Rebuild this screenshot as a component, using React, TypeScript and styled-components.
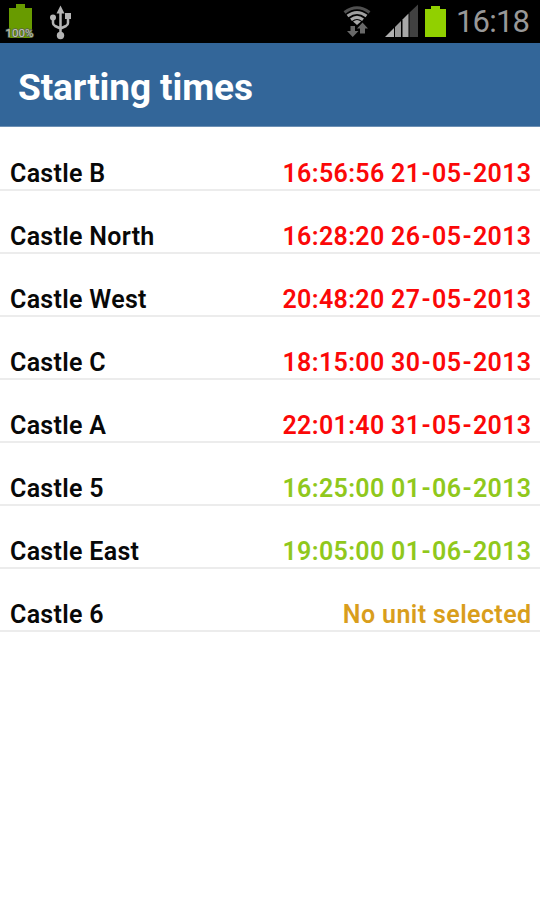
import React, { Fragment } from "react";
import styled, { createGlobalStyle } from "styled-components";

const GlobalStyle = createGlobalStyle`
  body {
    margin: 0;
    background: #fff;
    font-family: Roboto, "Noto Sans", sans-serif;
  }
`;

const Screen = styled.main`
  width: 540px;
  height: 900px;
  overflow: hidden;
  background: #fff;
`;

const StatusBar = styled.div`
  display: flex;
  justify-content: space-between;
  height: 43px;
  background: #000;
`;

const StatusGroup = styled.div`
  display: flex;
`;

const StatusIcon = styled.svg`
  display: block;
  height: 43px;
  flex: none;
`;

const Clock = styled.time`
  width: 84px;
  font-size: 31px;
  font-weight: 400;
  line-height: 43px;
  letter-spacing: -0.8px;
  color: #989898;
  white-space: nowrap;
`;

const Header = styled.header`
  box-sizing: border-box;
  height: 84px;
  padding: 0 18px;
  background: #336699;
  border-bottom: 1px solid #6d90b4;
`;

const Title = styled.h1`
  margin: 0;
  font-size: 37px;
  font-weight: 700;
  line-height: 89px;
  letter-spacing: -0.1px;
  color: #fff;
  white-space: nowrap;
`;

const List = styled.ul`
  margin: 0;
  padding: 1px 0 0;
  list-style: none;
`;

const Row = styled.li`
  box-sizing: border-box;
  display: flex;
  justify-content: space-between;
  align-items: flex-end;
  height: 63px;
  padding: 0 8.5px 0 10px;
  border-bottom: 2px solid #ececec;
  font-size: 25px;
  font-weight: 600;
  line-height: 30px;
  white-space: nowrap;
`;

const Name = styled.span`
  color: #080808;
  letter-spacing: 0.3px;
`;

const tones = { late: "#fb0808", ready: "#90c81c", empty: "#d99e1c" };
type Tone = keyof typeof tones;

const Value = styled.span<{ $tone: Tone }>`
  color: ${({ $tone }) => tones[$tone]};
  letter-spacing: ${({ $tone }) => ($tone === "empty" ? 0.4 : 0.34)}px;
`;

const Dash = styled.span`
  margin: 0 1.1px;
`;

const units: { name: string; value: string; tone: Tone }[] = [
  { name: "Castle B", value: "16:56:56 21-05-2013", tone: "late" },
  { name: "Castle North", value: "16:28:20 26-05-2013", tone: "late" },
  { name: "Castle West", value: "20:48:20 27-05-2013", tone: "late" },
  { name: "Castle C", value: "18:15:00 30-05-2013", tone: "late" },
  { name: "Castle A", value: "22:01:40 31-05-2013", tone: "late" },
  { name: "Castle 5", value: "16:25:00 01-06-2013", tone: "ready" },
  { name: "Castle East", value: "19:05:00 01-06-2013", tone: "ready" },
  { name: "Castle 6", value: "No unit selected", tone: "empty" },
];

const ChargeIcon = () => (
  <StatusIcon width="40" viewBox="0 0 40 43">
    <path d="M9 8h7V4h9v4h7v30H9z" fill="#689b00" />
    <text x="5.5" y="37" fontSize="11" fontFamily="Roboto, sans-serif" fill="#c3c9b9" stroke="#59614b" strokeWidth="1.5" paintOrder="stroke" textLength="28" lengthAdjust="spacingAndGlyphs">
      100%
    </text>
  </StatusIcon>
);

const UsbIcon = () => (
  <StatusIcon width="42" viewBox="40 0 42 43" fill="none" stroke="#b5b5b5" strokeWidth="2.5">
    <path d="M60.5 12v22M53 18v5q0 2 2 3l5.500 2.500M68 17v6q0 2-2 3l-5.500 2.500" />
    <path d="M60.500 5.500l4 8h-8z" fill="#b5b5b5" stroke="none" />
    <circle cx="53" cy="17.500" r="3" fill="#b5b5b5" stroke="none" />
    <path d="M65 13h6v6h-6z" fill="#b5b5b5" stroke="none" />
    <circle cx="60.500" cy="35.500" r="3.700" fill="#b5b5b5" stroke="none" />
  </StatusIcon>
);

const WifiIcon = () => (
  <StatusIcon width="42" viewBox="340 0 42 43" fill="none" strokeWidth="3">
    <path d="M344.5 12.500Q357 3 369.500 12.500" stroke="#505050" />
    <path d="M347.500 16Q357 9 366.500 16" stroke="#a0a0a0" />
    <path d="M351 19.700Q357 15 363 19.700" stroke="#a8a8a8" />
    <path d="M353 21.500Q357 18.500 361 21.500L357 25z" fill="#a8a8a8" />
    <path d="M350.500 26h4.500v5h3.500L352.700 37 347 31h3.500zM360 33.500h5v-5h3L362.500 22.500 357 28.500h3z" fill="#686868" />
  </StatusIcon>
);

const SignalIcon = () => (
  <StatusIcon width="40" viewBox="382 0 40 43">
    <path d="M385 37L394 28v9z" fill="#b0b0b0" />
    <path d="M395 27l6-6v16h-6z" fill="#999" />
    <path d="M402.5 19.500l6-6V37h-6z" fill="#a8a8a8" />
    <path d="M409.500 12.500l8.500-8V37h-8.500z" fill="#414141" />
  </StatusIcon>
);

const BatteryIcon = () => (
  <StatusIcon width="34" viewBox="422 0 34 43">
    <path d="M425 9h6V6h9v3h6v28h-21z" fill="#91d000" />
  </StatusIcon>
);

const spaced = (value: string) =>
  value.split("-").map((part, i) => (
    <Fragment key={i}>
      {i > 0 && <Dash>-</Dash>}
      {part}
    </Fragment>
  ));

export default function App() {
  return (
    <Screen>
      <GlobalStyle />
      <StatusBar>
        <StatusGroup>
          <ChargeIcon />
          <UsbIcon />
        </StatusGroup>
        <StatusGroup>
          <WifiIcon />
          <SignalIcon />
          <BatteryIcon />
          <Clock>16:18</Clock>
        </StatusGroup>
      </StatusBar>
      <Header>
        <Title>Starting times</Title>
      </Header>
      <List>
        {units.map(({ name, value, tone }) => (
          <Row key={name}>
            <Name>{name}</Name>
            <Value $tone={tone}>{spaced(value)}</Value>
          </Row>
        ))}
      </List>
    </Screen>
  );
}
